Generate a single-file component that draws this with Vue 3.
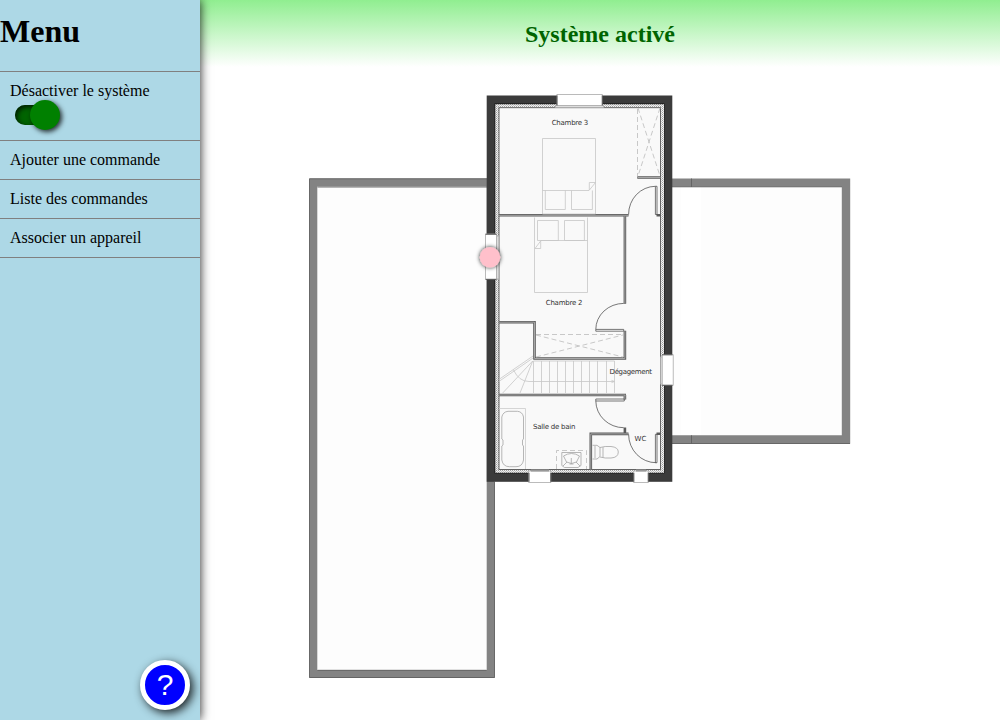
<script setup>
import { ref } from 'vue'

const active = ref(true)
const links = ['Ajouter une commande', 'Liste des commandes', 'Associer un appareil']
const treads = [541.5, 549.5, 557.5, 565.5, 573.5, 581.5, 589.5, 597.5, 606.5, 614.5]
const labels = [
  { text: 'Chambre 3', x: 551.7, y: 125, w: 36.6 },
  { text: 'Chambre 2', x: 545.8, y: 305.3, w: 36.6 },
  { text: 'Dégagement', x: 609.6, y: 374.4, w: 42.4 },
  { text: 'Salle de bain', x: 533, y: 428.6, w: 42.4 },
  { text: 'WC', x: 634.4, y: 440.6, w: 12 }
]
</script>

<template>
  <div class="layout">
    <nav class="menu">
      <h1>Menu</h1>
      <div class="item">
        Désactiver le système
        <button class="toggle" :class="{ on: active }" aria-label="Système" @click="active = !active">
          <span class="knob"></span>
        </button>
      </div>
      <div v-for="link in links" :key="link" class="item">{{ link }}</div>
      <button class="help">?</button>
    </nav>

    <main class="content">
      <h2>Système activé</h2>
      <svg class="plan" viewBox="200 67 800 653" width="800" height="653">
        <defs>
          <pattern id="insulation" width="2" height="2" patternUnits="userSpaceOnUse">
            <rect width="2" height="2" fill="#f2f2f2" />
            <rect width="1" height="1" fill="#a0a0a0" />
            <rect x="1" y="1" width="1" height="1" fill="#c4c4c4" />
          </pattern>
          <filter id="shade" x="-50%" y="-50%" width="200%" height="200%">
            <feDropShadow dx="0" dy="0" stdDeviation="2.2" flood-color="#000" flood-opacity=".85" />
          </filter>
        </defs>

        <!-- terraces -->
        <rect x="313.3" y="182.5" width="177.4" height="491.5" fill="#fdfdfd" stroke="#838383" stroke-width="8" />
        <path d="M309.5 677.5V178.8H487M494.5 482V677.5H309.5M317.5 187H487M317.5 670.3H486.5" class="edge" />
        <rect x="672" y="186" width="170" height="250" fill="#fdfdfd" />
        <path d="M672 182.6H846V439.5H672" stroke="#838383" stroke-width="8.4" />
        <rect x="681" y="187" width="20" height="248" fill="#fff" />
        <path d="M672 186.8H842M672 443.5H850M691.5 178.5V187M691.5 435.3V443.7" class="edge" />

        <!-- outer walls -->
        <rect x="486.7" y="95.5" width="185.6" height="386.3" fill="#3b3b3b" />
        <rect x="494.5" y="103.4" width="170" height="370" fill="#181818" />
        <rect x="495.3" y="104.2" width="168.7" height="368.6" fill="url(#insulation)" />
        <rect x="499" y="107.7" width="161.5" height="361.8" fill="#f9f9f9" stroke="#555" stroke-width=".9" />

        <!-- windows -->
        <g fill="#fff" stroke="#aaa" stroke-width=".8">
          <rect x="555.5" y="105.4" width="48" height="2.2" fill="#ddd" />
          <rect x="557" y="94.5" width="45.2" height="11" />
          <rect x="496.5" y="236" width="2.4" height="43" fill="#ddd" />
          <rect x="485.6" y="234" width="10.9" height="45.2" />
          <rect x="660.5" y="357" width="2" height="27" fill="#ddd" />
          <rect x="662.2" y="354.8" width="11" height="30.4" />
          <rect x="528.8" y="471" width="22" height="11.6" />
          <rect x="633.8" y="471" width="14.4" height="11.6" />
        </g>
        <path d="M485.6 234.3H496.5M485.6 279.4H496.5M557 95.5V105.5M602.3 95.5V105.5M529 473V481.8M550.8 473V481.8M633.8 473V481.8M648.3 473V481.8M662 354.8H672.5M662 385.3H672.5" stroke="#444" stroke-width=".8" />
        <path d="M531 470.5H549M636 470.5H646" stroke="#999" stroke-width="2" />

        <!-- partitions: dark outline with a lighter core -->
        <g class="partition">
          <path d="M499 215.3H628.5M624.9 216V303.7M499 322.2H534.5V358.5H624.9V330.7M499 395H626M624.9 395V399.5M624.9 427.5V433.8M628.5 433.9H590.8V469.5M637.3 177.5H660.5M656.5 433.8H660.5M656.5 215.3H660.5" />
          <path class="core" d="M499 215.3H628M624.9 216V303.2M499 322.2H534.5V358.5H624.9V331.2M499 395H625.5M624.9 395V399M628 433.9H590.8V469.5M637.8 177.5H660.5" />
        </g>

        <!-- doors -->
        <g class="door">
          <path d="M655.4 186.3H657V214.5H655.4ZM655.4 186.3A27 28 0 0 0 628.6 214.5" />
          <path d="M595.8 329.4H623.7V331.2H595.8ZM595.8 329.4A28 26 0 0 1 623.7 303.4" />
          <path d="M595.8 399H624.3V401H595.8ZM595.8 401A28 27 0 0 0 623.7 427.7" />
          <path d="M655.4 434.3H657V462.7H655.4ZM628.6 434.3A27.5 28.5 0 0 0 656.3 462.7" />
        </g>

        <!-- beds -->
        <g class="furniture">
          <path d="M542.5 138.5H595.5V214H542.5ZM542.5 190.5H589L595.5 182.5H589.3V190M545.3 190.5V209.5H565.3V190.5M571.5 190.5V209.5H592.4V190.5" />
          <path d="M534.5 217.5V292.5H587.5V217.5M587.5 240.5H541L535 248.5H540.7V240.5M537.5 220.5H558.3V240.5H537.5ZM564.5 220.5H584.4V240.5H564.5Z" />
        </g>

        <!-- cupboards -->
        <g class="dashed">
          <path d="M637.5 109V176M638 108L660 176M660 108L638 176M536 334.5H623M536 335L623 357M536 357L623 335" />
          <path d="M556.5 469V450.5H586.5V469" />
        </g>

        <!-- stairs -->
        <g class="furniture">
          <path v-for="x in treads" :key="x" :d="`M${x} 361V393`" />
          <path d="M533.5 361H614.5M533.5 361V393M532.7 361L520 393M532.7 361L502.7 393M533 358L499 381.4M533 356L499 379.4M513.5 370Q519 381.5 529 381.5H614M611.5 380.4L614.5 381.5L611.5 382.6" />
        </g>

        <!-- bathroom -->
        <g class="furniture bath">
          <path class="faint" d="M499 408.5H525.5V469" />
          <path d="M508 411.3H517.5Q522.5 411.8 523.5 417V439L522.5 440V445L523.5 446V460Q522.5 466.7 516 466.7H509.5Q503 466.7 501.8 460V446L503 445V440L501.8 439V417Q503 411.8 508 411.3Z" />
          <path d="M561.8 452.5H581V465.5L578 467.5H564.5L561.8 465.5ZM563.5 456Q571.5 451 579.5 456L576.5 462Q571.5 465 566.5 462ZM571.3 458V464M569.5 464H573.5M563 466L567 462M580 466L576 462" />
          <path d="M592.5 445.3H597L600 447.5V456.5L597 459H592.5M595 446V458M600 447.5Q605 446 611 446.5Q618.3 447.2 618.3 452Q618.3 457.5 611 458Q605 458.5 600 457M603 447.2V457.5" />
        </g>

        <text v-for="l in labels" :key="l.text" class="label" :x="l.x" :y="l.y" :textLength="l.w">{{ l.text }}</text>

        <circle cx="490" cy="257.2" r="10.3" fill="pink" filter="url(#shade)" />
      </svg>
    </main>
  </div>
</template>

<style>
body {
  margin: 0;
  overflow: hidden;
}
</style>

<style scoped>
.layout {
  display: flex;
  height: 720px;
  font: 16px/18px "Liberation Serif", "Times New Roman", serif;
  color: #000;
  background: #fff;
}
.menu {
  position: relative;
  z-index: 1;
  width: 200px;
  flex: none;
  display: flex;
  flex-direction: column;
  background: lightblue;
  box-shadow: 0 0 10px rgba(0, 0, 0, 0.9);
}
h1 {
  margin: 13px 0 21px;
  font-size: 32px;
  line-height: 37px;
}
.item {
  padding: 10px;
  border-top: 1px solid gray;
}
.item:nth-last-child(2) {
  border-bottom: 1px solid gray;
}
.toggle {
  display: block;
  width: 40px;
  height: 20px;
  margin: 5px;
  padding: 0;
  border: 0;
  border-radius: 10px;
  background: #444;
  box-shadow: inset 2px 2px 5px rgba(0, 0, 0, 0.75);
}
.toggle.on {
  background: darkgreen;
}
.knob {
  display: block;
  width: 30px;
  height: 30px;
  margin: -5px 0 -5px -5px;
  border-radius: 50%;
  background: gray;
  box-shadow: 2px 2px 5px rgba(0, 0, 0, 0.8);
}
.on .knob {
  margin-left: 15px;
  background: green;
}
.help {
  width: 50px;
  height: 50px;
  margin: auto 10px 10px auto;
  padding: 0;
  border: 5px solid #fff;
  border-radius: 50%;
  background: blue;
  color: #fff;
  font: 30px/40px "Liberation Sans", Arial, sans-serif;
  text-align: center;
  box-shadow: 3px 3px 10px rgba(0, 0, 0, 0.85);
}
.content {
  flex: 1;
  min-width: 0;
}
h2 {
  margin: 0;
  padding: 21px 0 19px;
  font-size: 24px;
  line-height: 27px;
  text-align: center;
  color: darkgreen;
  background: linear-gradient(lightgreen, #fff);
}
.plan {
  display: block;
}
.plan path {
  fill: none;
}
.edge {
  stroke: #616161;
  stroke-width: 0.9;
}
.partition path {
  stroke: #5a5a5a;
  stroke-width: 2.6;
}
.partition .core {
  stroke: #a6a6a6;
  stroke-width: 1;
}
.door path {
  stroke: #555;
  stroke-width: 0.8;
}
.furniture path {
  stroke: #c6c6c6;
  stroke-width: 0.8;
}
.bath path {
  stroke: #a4a4a4;
}
.bath .faint {
  stroke: #ccc;
}
.dashed path {
  stroke: #bbb;
  stroke-width: 0.8;
  stroke-dasharray: 5 3;
}
.label {
  font: 7px "DejaVu Sans", sans-serif;
  fill: #333;
}
</style>
